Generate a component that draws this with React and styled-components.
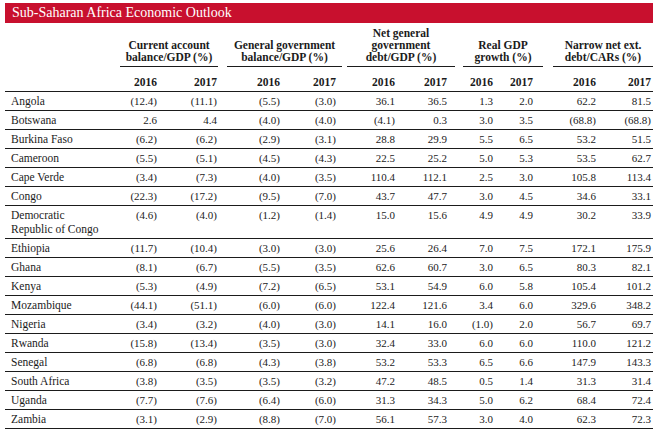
import React from "react";
import styled, { createGlobalStyle } from "styled-components";

const GlobalStyle = createGlobalStyle`
  body {
    margin: 0;
    background: #ffffff;
    font-family: "Liberation Serif", "Times New Roman", serif;
    color: #1b1b1b;
  }
`;

// country + 10 value columns
const COLS = "105px 49px 60px 63px 56px 59px 52px 46px 40px 63px 55px";

const Page = styled.div`
  width: 648px;
  padding: 3px 0 0 5px;
`;

const TitleBar = styled.div`
  height: 20px;
  line-height: 20px;
  padding-left: 7px;
  background: #c8102e;
  color: #ffffff;
  font-size: 14px;
`;

const GroupRow = styled.div`
  display: grid;
  grid-template-columns: ${COLS};
  align-items: end;
  padding-top: 4px;
`;

const Group = styled.div`
  grid-column: span 2;
  margin: 0 ${(p) => p.$mr}px 0 ${(p) => p.$ml}px;
  padding-bottom: 3px;
  border-bottom: 1px solid #1b1b1b;
  text-align: center;
  font-weight: bold;
  font-size: 11.5px;
  line-height: 12px;
`;

const Row = styled.div`
  display: grid;
  grid-template-columns: ${COLS};
  align-items: start;
  border-bottom: 1px solid #1b1b1b;
  font-size: 11px;
  line-height: 14px;
  padding: 2px 0;
`;

const YearRow = styled(Row)`
  padding: 8px 0 2px;
  font-weight: bold;
  font-size: 11.5px;
`;

const Country = styled.div`
  padding-left: 6px;
  font-size: 11.5px;
`;

const Cell = styled.div`
  text-align: right;
  padding-right: 2px;
  white-space: nowrap;
`;

const groups = [
  { label: ["Current account", "balance/GDP (%)"], ml: 10, mr: 1 },
  { label: ["General government", "balance/GDP (%)"], ml: 8, mr: -4 },
  { label: ["Net general", "government", "debt/GDP (%)"], ml: 9, mr: -6 },
  { label: ["Real GDP", "growth (%)"], ml: 14, mr: -8 },
  { label: ["Narrow net ext.", "debt/CARs (%)"], ml: 18, mr: 0 },
];

const rows = [
  ["Angola", "(12.4)", "(11.1)", "(5.5)", "(3.0)", "36.1", "36.5", "1.3", "2.0", "62.2", "81.5"],
  ["Botswana", "2.6", "4.4", "(4.0)", "(4.0)", "(4.1)", "0.3", "3.0", "3.5", "(68.8)", "(68.8)"],
  ["Burkina Faso", "(6.2)", "(6.2)", "(2.9)", "(3.1)", "28.8", "29.9", "5.5", "6.5", "53.2", "51.5"],
  ["Cameroon", "(5.5)", "(5.1)", "(4.5)", "(4.3)", "22.5", "25.2", "5.0", "5.3", "53.5", "62.7"],
  ["Cape Verde", "(3.4)", "(7.3)", "(4.0)", "(3.5)", "110.4", "112.1", "2.5", "3.0", "105.8", "113.4"],
  ["Congo", "(22.3)", "(17.2)", "(9.5)", "(7.0)", "43.7", "47.7", "3.0", "4.5", "34.6", "33.1"],
  [["Democratic", "Republic of Congo"], "(4.6)", "(4.0)", "(1.2)", "(1.4)", "15.0", "15.6", "4.9", "4.9", "30.2", "33.9"],
  ["Ethiopia", "(11.7)", "(10.4)", "(3.0)", "(3.0)", "25.6", "26.4", "7.0", "7.5", "172.1", "175.9"],
  ["Ghana", "(8.1)", "(6.7)", "(5.5)", "(3.5)", "62.6", "60.7", "3.0", "6.5", "80.3", "82.1"],
  ["Kenya", "(5.3)", "(4.9)", "(7.2)", "(6.5)", "53.1", "54.9", "6.0", "5.8", "105.4", "101.2"],
  ["Mozambique", "(44.1)", "(51.1)", "(6.0)", "(6.0)", "122.4", "121.6", "3.4", "6.0", "329.6", "348.2"],
  ["Nigeria", "(3.4)", "(3.2)", "(4.0)", "(3.0)", "14.1", "16.0", "(1.0)", "2.0", "56.7", "69.7"],
  ["Rwanda", "(15.8)", "(13.4)", "(3.5)", "(3.0)", "32.4", "33.0", "6.0", "6.0", "110.0", "121.2"],
  ["Senegal", "(6.8)", "(6.8)", "(4.3)", "(3.8)", "53.2", "53.3", "6.5", "6.6", "147.9", "143.3"],
  ["South Africa", "(3.8)", "(3.5)", "(3.5)", "(3.2)", "47.2", "48.5", "0.5", "1.4", "31.3", "31.4"],
  ["Uganda", "(7.7)", "(7.6)", "(6.4)", "(6.0)", "31.3", "34.3", "5.0", "6.2", "68.4", "72.4"],
  ["Zambia", "(3.1)", "(2.9)", "(8.8)", "(7.0)", "56.1", "57.3", "3.0", "4.0", "62.3", "72.3"],
];

const years = ["2016", "2017"];

export default function App() {
  return (
    <Page>
      <GlobalStyle />
      <TitleBar>Sub-Saharan Africa Economic Outlook</TitleBar>

      <GroupRow>
        <div />
        {groups.map((g) => (
          <Group key={g.label.join()} $ml={g.ml} $mr={g.mr}>
            {g.label.map((line) => (
              <div key={line}>{line}</div>
            ))}
          </Group>
        ))}
      </GroupRow>

      <YearRow>
        <div />
        {groups.flatMap((g, i) =>
          years.map((y) => <Cell key={i + y}>{y}</Cell>)
        )}
      </YearRow>

      {rows.map(([name, ...vals]) => (
        <Row key={[].concat(name).join(" ")}>
          <Country>
            {Array.isArray(name) ? name.map((n) => <div key={n}>{n}</div>) : name}
          </Country>
          {vals.map((v, i) => (
            <Cell key={i}>{v}</Cell>
          ))}
        </Row>
      ))}
    </Page>
  );
}
